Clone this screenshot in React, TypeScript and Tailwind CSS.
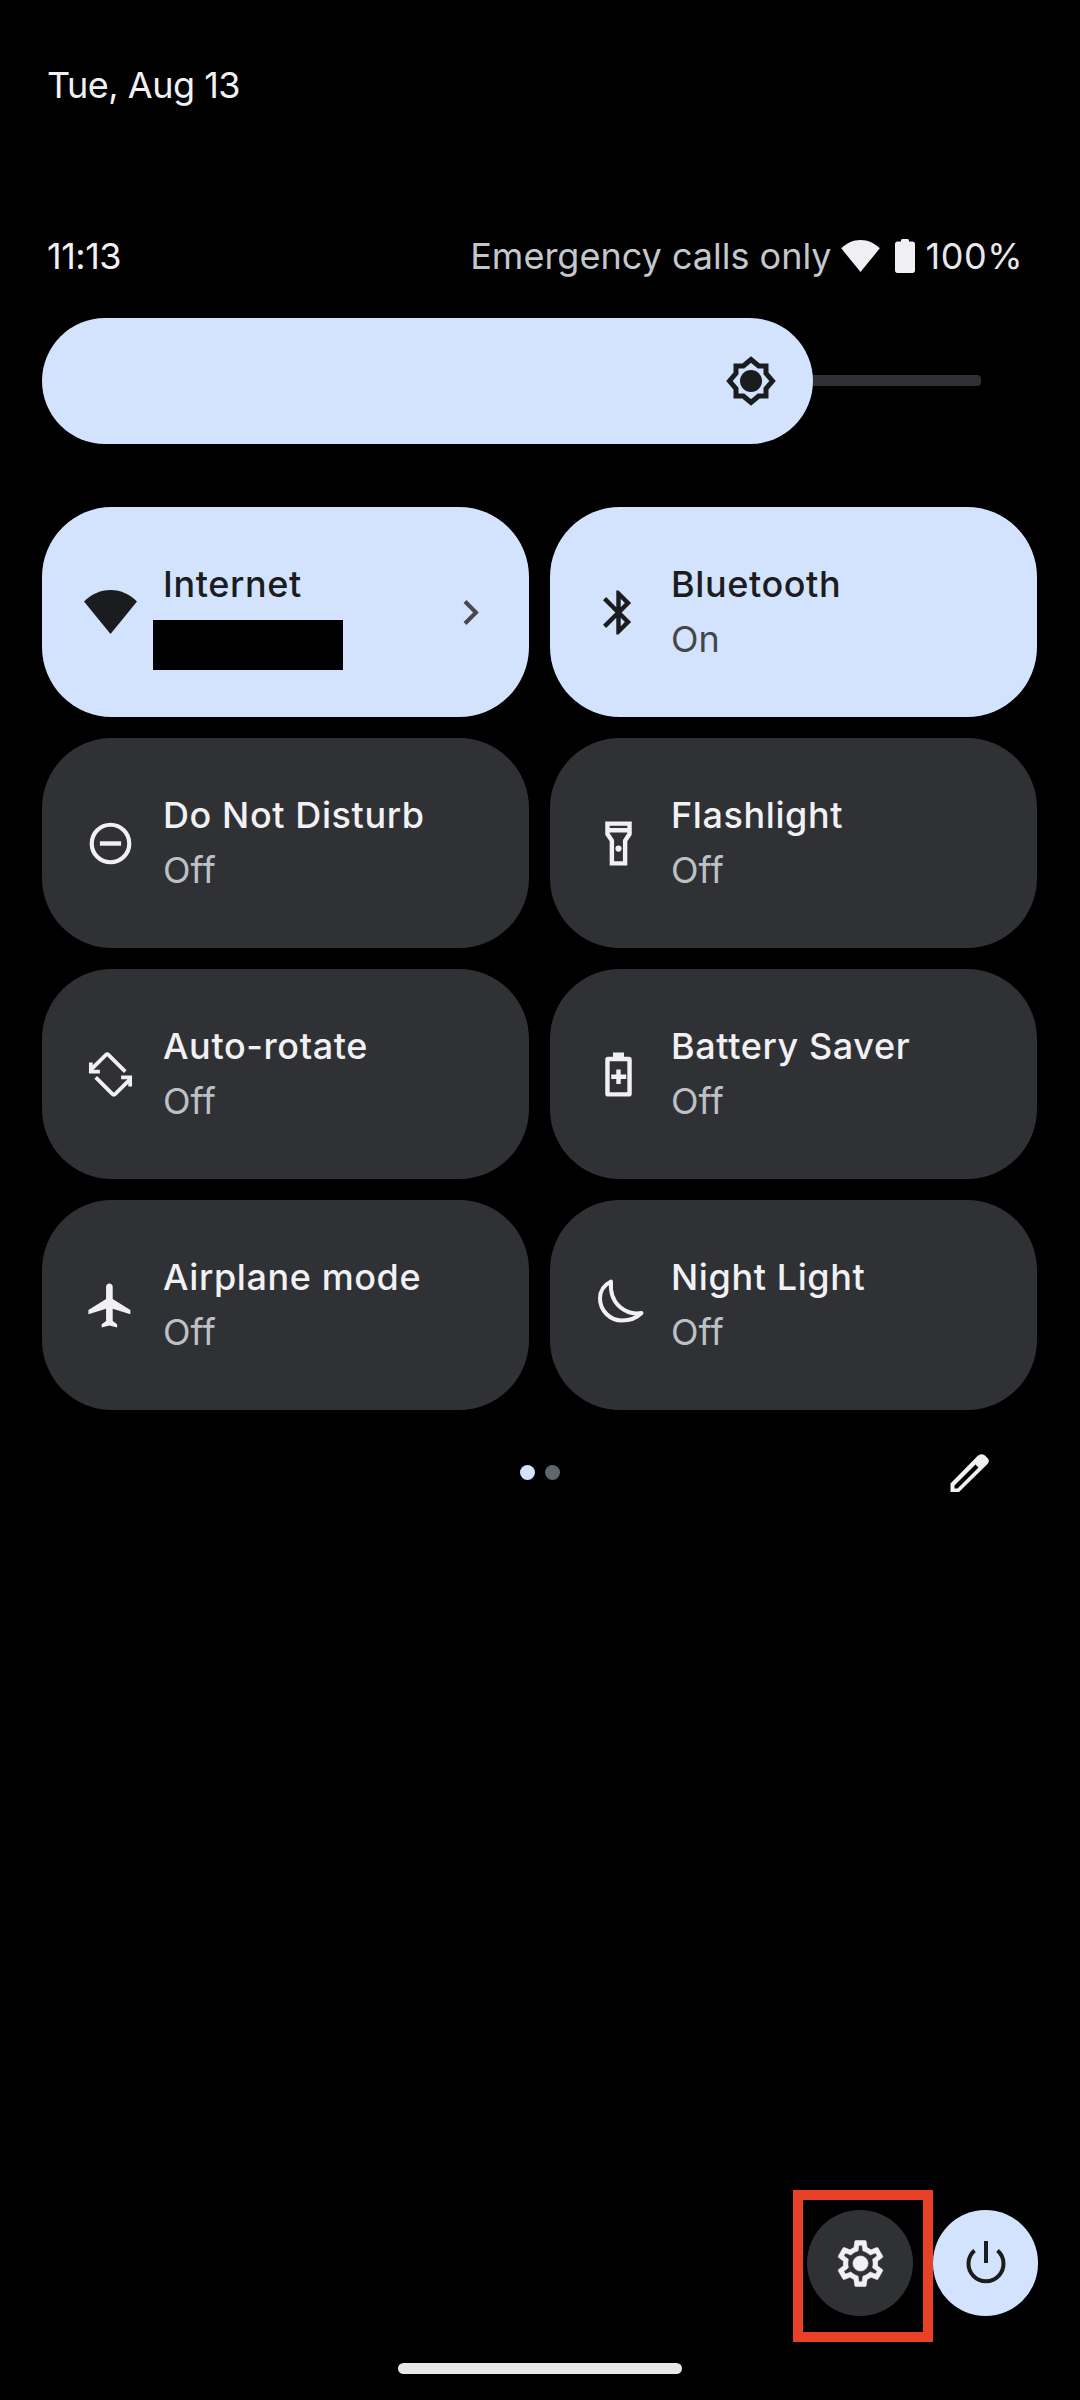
import React from "react";

const DARK = "#1b1c1e";
const LIGHT = "#f1f1f4";

function Icon({ children, color, className = "w-[53px] h-[53px]" }: { children: React.ReactNode; color: string; className?: string }) {
  return (
    <svg viewBox="0 0 24 24" className={`${className} shrink-0`} fill={color} style={{ color }}>
      {children}
    </svg>
  );
}

const WifiFan = ({ color, className }: { color: string; className: string }) => (
  <svg viewBox="0 0 53 44" className={className} fill={color}>
    <path d="M26.5 44 0 11.5C7 4.5 16 0 26.5 0S46 4.5 53 11.5Z" />
  </svg>
);

const icons: Record<string, (c: string) => React.ReactNode> = {
  wifi: (c) => (
    <div className="w-[53px] h-[53px] shrink-0 flex items-center justify-center">
      <WifiFan color={c} className="w-[53px] h-[44px]" />
    </div>
  ),
  bluetooth: (c) => (
    <Icon color={c}>
      <path d="M17.71 7.71 12 2h-1v7.59L6.41 5 5 6.41 10.59 12 5 17.59 6.41 19 11 14.41V22h1l5.71-5.71-4.3-4.29 4.3-4.29zM13 5.83l1.88 1.88L13 9.59V5.83zm1.88 10.46L13 18.17v-3.76l1.88 1.88z" />
    </Icon>
  ),
  dnd: (c) => (
    <Icon color={c}>
      <circle cx="12" cy="12" r="8.5" fill="none" stroke={c} strokeWidth="1.9" />
      <rect x="7.2" y="11" width="9.6" height="2" />
    </Icon>
  ),
  flash: (c) => (
    <Icon color={c}>
      <path d="M18 2H6v6l2 3v11h8V11l2-3V2zm-2 2v1H8V4h8zm-2 6.4V20h-4v-9.6L8 7.4V7h8v.4l-2 3z" />
      <circle cx="12" cy="14.3" r="1.4" />
    </Icon>
  ),
  rotate: (c) => {
    const half = (
      <g fill="none" stroke={c} strokeWidth="1.7" strokeLinejoin="miter">
        <path d="M18.7 10.7 11.2 3.2a1 1 0 0 0-1.4 0L3.4 9.6" />
        <path d="M3.1 6.6V10.7H7.2" />
      </g>
    );
    return (
      <Icon color={c}>
        {half}
        <g transform="rotate(180 12 12)">{half}</g>
      </Icon>
    );
  },
  battery: (c) => (
    <Icon color={c}>
      <path d="M14.5 4V2h-5v2H7.2C6.5 4 6 4.5 6 5.2v15.6c0 .7.5 1.2 1.2 1.2h9.6c.7 0 1.2-.5 1.2-1.2V5.2C18 4.500 17.500 4 16.800 4h-2.300zM16 20H8V6h8v14z" />
      <path d="M11 9.700h2V12h2.500v2H13v2.300h-2V14H8.700v-2H11z" />
    </Icon>
  ),
  plane: (c) => (
    <Icon color={c}>
      <path d="M21 16v-2l-8-5V3.500c0-.83-.67-1.500-1.500-1.500S10 2.670 10 3.500V9l-8 5v2l8-2.500V19l-2 1.500V22l3.500-1 3.500 1v-1.500L13 19v-5.500l8 2.500z" />
    </Icon>
  ),
  moon: (c) => (
    <svg viewBox="2 6.500 53 53" className="w-[53px] h-[53px] shrink-0">
      <path
        d="M21 9C13 13 10 20 10 26C10 38 20 48 32 48C40 48 47 45 51.500 40.500C36 43 19 32 21 9Z"
        fill="none"
        stroke={c}
        strokeWidth="4"
        strokeLinejoin="round"
      />
    </svg>
  ),
};

type TileProps = { icon: string; title: string; sub?: string; on?: boolean; chevron?: boolean; redacted?: boolean };

function Tile({ icon, title, sub, on, chevron, redacted }: TileProps) {
  const fg = on ? DARK : LIGHT;
  return (
    <div className={`h-[210px] rounded-[70px] flex items-center pl-[42px] pr-[50px] ${on ? "bg-[#d3e3fd]" : "bg-[#303134]"}`}>
      {icons[icon](fg)}
      <div className="ml-[26px] flex flex-col min-w-0">
        <div className={`text-[36px] leading-[55px] font-medium font-['Inter','Noto_Sans',sans-serif] tracking-[0.6px] ${on ? "text-[#1b1c1e]" : "text-[#f1f1f4]"}`}>
          {title}
        </div>
        {redacted ? (
          <div className="h-[50px] w-[190px] bg-black -ml-[10px] mt-[8px] -mb-[3px]" />
        ) : (
          <div className={`text-[36px] leading-[55px] font-['Inter','Noto_Sans',sans-serif] ${on ? "text-[#444746]" : "text-[#bdc1c6]"}`}>{sub}</div>
        )}
      </div>
      {chevron && (
        <svg viewBox="0 0 16 25" className="ml-auto w-[16px] h-[25px]" fill="none" stroke="#46484c" strokeWidth="4">
          <path d="M2 1.500 13 12.500 2 23.500" />
        </svg>
      )}
    </div>
  );
}

const tiles: TileProps[] = [
  { icon: "wifi", title: "Internet", on: true, chevron: true, redacted: true },
  { icon: "bluetooth", title: "Bluetooth", sub: "On", on: true },
  { icon: "dnd", title: "Do Not Disturb", sub: "Off" },
  { icon: "flash", title: "Flashlight", sub: "Off" },
  { icon: "rotate", title: "Auto-rotate", sub: "Off" },
  { icon: "battery", title: "Battery Saver", sub: "Off" },
  { icon: "plane", title: "Airplane mode", sub: "Off" },
  { icon: "moon", title: "Night Light", sub: "Off" },
];

export default function App() {
  return (
    <div className="w-[1080px] h-[2400px] bg-black flex flex-col overflow-hidden font-['Inter',sans-serif]">
      <div className="pt-[64px] pl-[47px] text-[36px] leading-[42px] tracking-[-0.5px] text-[#f1f1f4]">Tue, Aug 13</div>

      <div className="mt-[129px] pl-[47px] pr-[57px] flex items-center justify-between h-[42px]">
        <span className="text-[36px] leading-[42px] tracking-[-0.5px] text-[#f1f1f4]">11:13</span>
        <div className="flex items-center">
          <span className="text-[36px] leading-[42px] text-[#c4c7cc]">Emergency calls only</span>
          <WifiFan color="#f0f0f4" className="ml-[9px] w-[39px] h-[32px]" />
          <svg viewBox="0 0 20 34" className="ml-[15px] w-[20px] h-[34px]" fill="#f0f0f4">
            <path d="M6 2.500V1.500C6 .7 6.700 0 7.500 0h5c.8 0 1.500.7 1.500 1.500v1h3.500C19 2.500 20 3.500 20 5v26.500c0 1.400-1 2.500-2.500 2.500h-15C1 34 0 32.900 0 31.500V5c0-1.500 1-2.500 2.500-2.500Z" />
          </svg>
          <span className="ml-[11px] text-[36px] leading-[42px] tracking-[0.5px] text-[#e8e8ec]">100%</span>
        </div>
      </div>

      <div className="mt-[41px] pl-[42px] flex items-start h-[126px]">
        <div className="w-[771px] h-[126px] rounded-[63px] bg-[#d3e3fd] flex items-center justify-end pr-[37px]">
          <svg viewBox="0 0 50 50" className="w-[50px] h-[50px]">
            <polygon
              points="25,3.500 32.700,10 40,10 40,17.300 46.500,25 40,32.700 40,40 32.700,40 25,46.500 17.300,40 10,40 10,32.700 3.500,25 10,17.300 10,10 17.300,10"
              fill="none"
              stroke={DARK}
              strokeWidth="5"
              strokeLinejoin="miter"
            />
            <circle cx="25" cy="25" r="11" fill={DARK} />
          </svg>
        </div>
        <div className="mt-[57px] w-[168px] h-[11px] rounded-r-[4px] bg-[#303134]" />
      </div>

      <div className="mt-[63px] pl-[42px] pr-[43px] grid grid-cols-2 gap-[21px]">
        {tiles.map((t) => (
          <Tile key={t.title} {...t} />
        ))}
      </div>

      <div className="mt-[36px] relative h-[53px] flex items-center justify-center">
        <div className="flex gap-[10px]">
          <div className="w-[15px] h-[15px] rounded-full bg-[#d3e3fd]" />
          <div className="w-[15px] h-[15px] rounded-full bg-[#5f6670]" />
        </div>
        <svg viewBox="3 1 53 53" className="absolute left-[943px] top-0 w-[53px] h-[53px]" fill={LIGHT} fillRule="evenodd">
          <path d="M10.500 47V38.500L37 11.500Q41 7.500 45 10.500L47.500 13Q50.500 16 47 19.500L19 47ZM14.500 40.500 35.500 19.500 38.500 22.500 17.500 43.500H14.500Z" />
        </svg>
      </div>

      <div className="mt-auto flex justify-end gap-[20px] pr-[42px]">
        <div className="relative w-[106px] h-[106px] rounded-full bg-[#303134] flex items-center justify-center">
          <svg viewBox="0 0 24 24" className="w-[55px] h-[55px]" fill={LIGHT} stroke={LIGHT} strokeWidth="0.25">
            <path d="M19.430 12.980c.04-.32.07-.64.07-.98 0-.34-.03-.66-.07-.98l2.110-1.650c.19-.15.24-.42.12-.64l-2-3.460c-.09-.16-.26-.25-.44-.25-.06 0-.12.01-.17.03l-2.490 1c-.52-.4-1.080-.73-1.690-.98l-.38-2.650C14.460 2.180 14.250 2 14 2h-4c-.25 0-.46.18-.49.42l-.38 2.650c-.61.25-1.170.59-1.690.98l-2.490-1c-.06-.02-.12-.03-.18-.03-.17 0-.34.09-.43.25l-2 3.460c-.13.22-.07.49.12.64l2.110 1.650c-.04.32-.07.65-.07.98 0 .33.03.66.07.98l-2.110 1.650c-.19.15-.24.42-.12.64l2 3.460c.09.16.26.25.44.25.06 0 .12-.01.17-.03l2.490-1c.52.4 1.080.73 1.690.98l.38 2.650c.03.24.24.42.49.42h4c.25 0 .46-.18.49-.42l.38-2.650c.61-.25 1.170-.59 1.690-.98l2.490 1c.06.02.12.03.18.03.17 0 .34-.09.43-.25l2-3.460c.12-.22.07-.49-.12-.64l-2.110-1.650zm-1.980-1.710c.04.31.05.52.05.73 0 .21-.02.43-.05.73l-.14 1.130.89.7 1.080.84-.7 1.210-1.270-.51-1.040-.42-.9.68c-.43.32-.84.56-1.250.73l-1.060.43-.16 1.130-.2 1.350h-1.400l-.19-1.350-.16-1.130-1.060-.43c-.43-.18-.83-.41-1.230-.71l-.91-.7-1.060.43-1.270.51-.7-1.210 1.080-.84.89-.7-.14-1.130c-.03-.31-.05-.54-.05-.74s.02-.43.05-.73l.14-1.130-.89-.7-1.080-.84.7-1.210 1.270.51 1.040.42.9-.68c.43-.32.84-.56 1.250-.73l1.060-.43.16-1.130.2-1.350h1.390l.19 1.350.16 1.130 1.060.43c.43.18.83.41 1.230.71l.91.7 1.060-.43 1.270-.51.7 1.210-1.070.85-.89.7.14 1.130z" />
            <circle cx="12" cy="12" r="3.300" />
          </svg>
          <div className="absolute -left-[14px] -top-[20px] w-[140px] h-[152px] border-[10px] border-[#e94125]" />
        </div>
        <div className="w-[105px] h-[106px] rounded-full bg-[#d3e3fd] flex items-center justify-center">
          <svg viewBox="0 0 50 50" className="w-[50px] h-[50px]" fill="none" stroke={DARK} strokeWidth="4">
            <path d="M25 3V25" />
            <path d="M13.500 12.500A17.500 17.500 0 1 0 36.500 12.500" />
          </svg>
        </div>
      </div>

      <div className="mt-[47px] mb-[26px] mx-auto w-[284px] h-[11px] rounded-full bg-[#e8e8e8]" />
    </div>
  );
}
